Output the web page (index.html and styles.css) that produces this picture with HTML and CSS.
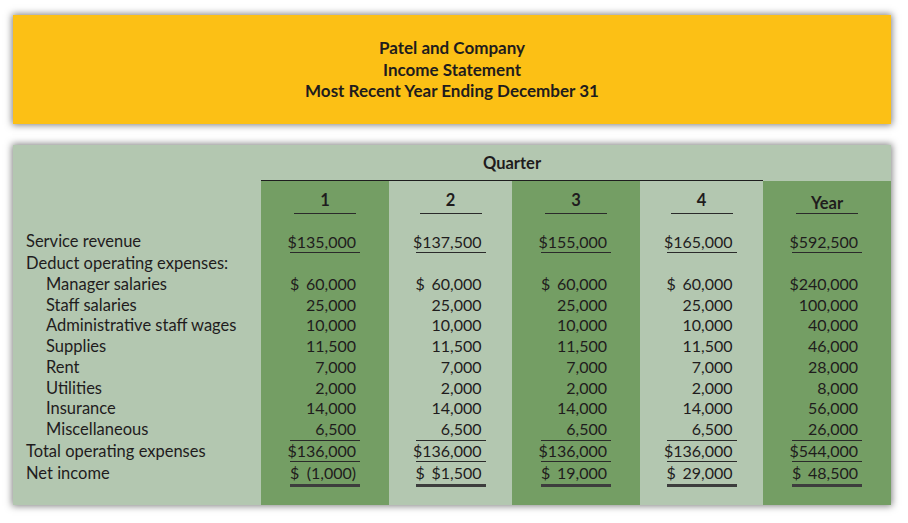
FILE: index.html
```html
<!DOCTYPE html>
<html>
<head>
<meta charset="utf-8">
<link rel="stylesheet" href="styles.css">
</head>
<body>
<div class="page">
  <div class="title">
    <div>Patel and Company</div>
    <div>Income Statement</div>
    <div>Most Recent Year Ending December 31</div>
  </div>
  <div class="panel">
    <div class="corner"></div>
    <div class="quarter">Quarter</div>
    <div class="corner"></div>

    <div class="col labels">
      <div class="hd"></div>
      <div class="cell rev"><div class="box">Service revenue</div></div>
      <div class="cell"><div class="box">Deduct operating expenses:</div></div>
      <div class="cell"><div class="box ind">Manager salaries</div></div>
      <div class="cell"><div class="box ind">Staff salaries</div></div>
      <div class="cell"><div class="box ind">Administrative staff wages</div></div>
      <div class="cell"><div class="box ind">Supplies</div></div>
      <div class="cell"><div class="box ind">Rent</div></div>
      <div class="cell"><div class="box ind">Utilities</div></div>
      <div class="cell"><div class="box ind">Insurance</div></div>
      <div class="cell"><div class="box ind">Miscellaneous</div></div>
      <div class="cell tot"><div class="box">Total operating expenses</div></div>
      <div class="cell net"><div class="box">Net income</div></div>
    </div>

    <div class="col val dark">
      <div class="hd"><div class="hdbox">1</div></div>
      <div class="cell rev"><div class="box end">$135,000</div></div>
      <div class="cell"><div class="box"></div></div>
      <div class="cell"><div class="box"><span>$</span><span>60,000</span></div></div>
      <div class="cell"><div class="box">25,000</div></div>
      <div class="cell"><div class="box">10,000</div></div>
      <div class="cell"><div class="box">11,500</div></div>
      <div class="cell"><div class="box">7,000</div></div>
      <div class="cell"><div class="box">2,000</div></div>
      <div class="cell"><div class="box">14,000</div></div>
      <div class="cell"><div class="box">6,500</div></div>
      <div class="cell tot"><div class="box end">$136,000</div></div>
      <div class="cell net"><div class="box"><span>$</span><span class="paren">(1,000)</span></div></div>
    </div>

    <div class="col val">
      <div class="hd"><div class="hdbox">2</div></div>
      <div class="cell rev"><div class="box"><span>$</span><span>137,500</span></div></div>
      <div class="cell"><div class="box"></div></div>
      <div class="cell"><div class="box"><span>$</span><span>60,000</span></div></div>
      <div class="cell"><div class="box">25,000</div></div>
      <div class="cell"><div class="box">10,000</div></div>
      <div class="cell"><div class="box">11,500</div></div>
      <div class="cell"><div class="box">7,000</div></div>
      <div class="cell"><div class="box">2,000</div></div>
      <div class="cell"><div class="box">14,000</div></div>
      <div class="cell"><div class="box">6,500</div></div>
      <div class="cell tot"><div class="box"><span>$</span><span>136,000</span></div></div>
      <div class="cell net"><div class="box"><span>$</span><span>$1,500</span></div></div>
    </div>

    <div class="col val dark">
      <div class="hd"><div class="hdbox">3</div></div>
      <div class="cell rev"><div class="box"><span>$</span><span>155,000</span></div></div>
      <div class="cell"><div class="box"></div></div>
      <div class="cell"><div class="box"><span>$</span><span>60,000</span></div></div>
      <div class="cell"><div class="box">25,000</div></div>
      <div class="cell"><div class="box">10,000</div></div>
      <div class="cell"><div class="box">11,500</div></div>
      <div class="cell"><div class="box">7,000</div></div>
      <div class="cell"><div class="box">2,000</div></div>
      <div class="cell"><div class="box">14,000</div></div>
      <div class="cell"><div class="box">6,500</div></div>
      <div class="cell tot"><div class="box"><span>$</span><span>136,000</span></div></div>
      <div class="cell net"><div class="box"><span>$</span><span>19,000</span></div></div>
    </div>

    <div class="col val">
      <div class="hd"><div class="hdbox">4</div></div>
      <div class="cell rev"><div class="box"><span>$</span><span>165,000</span></div></div>
      <div class="cell"><div class="box"></div></div>
      <div class="cell"><div class="box"><span>$</span><span>60,000</span></div></div>
      <div class="cell"><div class="box">25,000</div></div>
      <div class="cell"><div class="box">10,000</div></div>
      <div class="cell"><div class="box">11,500</div></div>
      <div class="cell"><div class="box">7,000</div></div>
      <div class="cell"><div class="box">2,000</div></div>
      <div class="cell"><div class="box">14,000</div></div>
      <div class="cell"><div class="box">6,500</div></div>
      <div class="cell tot"><div class="box"><span>$</span><span>136,000</span></div></div>
      <div class="cell net"><div class="box"><span>$</span><span>29,000</span></div></div>
    </div>

    <div class="col val dark">
      <div class="hd"><div class="hdbox year">Year</div></div>
      <div class="cell rev"><div class="box"><span>$</span><span>592,500</span></div></div>
      <div class="cell"><div class="box"></div></div>
      <div class="cell"><div class="box"><span>$</span><span>240,000</span></div></div>
      <div class="cell"><div class="box">100,000</div></div>
      <div class="cell"><div class="box">40,000</div></div>
      <div class="cell"><div class="box">46,000</div></div>
      <div class="cell"><div class="box">28,000</div></div>
      <div class="cell"><div class="box">8,000</div></div>
      <div class="cell"><div class="box">56,000</div></div>
      <div class="cell"><div class="box">26,000</div></div>
      <div class="cell tot"><div class="box"><span>$</span><span>544,000</span></div></div>
      <div class="cell net"><div class="box"><span>$</span><span>48,500</span></div></div>
    </div>
  </div>
</div>
</body>
</html>
```

FILE: styles.css
```css
html, body {
  margin: 0;
  padding: 0;
  background: #ffffff;
}

body {
  font-family: Lato, "Open Sans", "Liberation Sans", sans-serif;
  color: #1f1c1d;
  font-size: 16px;
}

.page {
  display: flex;
  flex-direction: column;
  gap: 21px;
  padding: 15px 17px 18px 13px;
}

.title {
  height: 109px;
  background: #fcc015;
  box-shadow: 0 0 7px 1px rgba(0, 0, 0, 0.5);
  display: flex;
  flex-direction: column;
  justify-content: center;
  align-items: center;
  font-weight: 700;
  font-size: 17px;
  line-height: 21.5px;
}

.panel {
  height: 360px;
  background: #b3c7b0;
  box-shadow: 0 0 7px 1px rgba(0, 0, 0, 0.5);
  display: grid;
  grid-template-columns: 248px 128px 123px 128px 123px 128px;
  grid-template-rows: 36px 1fr;
}

.quarter {
  grid-column: 2 / 6;
  box-sizing: border-box;
  height: 36px;
  padding-top: 8px;
  line-height: 20px;
  font-size: 16.5px;
  text-align: center;
  font-weight: 700;
  border-bottom: 1.5px solid #1e1e1e;
}

.col {
  display: flex;
  flex-direction: column;
}

.dark {
  background: #749e64;
}

.hd {
  height: 50px;
  box-sizing: border-box;
}

.hdbox {
  width: 62px;
  margin: 0 auto;
  padding-top: 9px;
  padding-bottom: 3px;
  line-height: 20px;
  font-size: 16.5px;
  text-align: center;
  font-weight: 700;
  border-bottom: 1.5px solid #2a2a2a;
}

.hdbox.year {
  padding-top: 12px;
  padding-bottom: 0;
}

.cell {
  height: 20.75px;
  line-height: 20.75px;
  white-space: nowrap;
}

.cell .box {
  box-sizing: border-box;
  height: 100%;
}

.labels .box {
  padding-left: 13px;
  font-size: 16.5px;
}

.labels .box.ind {
  padding-left: 33px;
}

.val .box {
  width: 70px;
  margin: 0 auto;
  padding-right: 4px;
  display: flex;
  justify-content: flex-end;
}

.val .box span:first-child:not(:last-child) {
  margin-right: auto;
}

.cell.rev {
  height: 22px;
}

.cell.rev .box {
  line-height: 21px;
  border-bottom: 1px solid transparent;
}

.cell.tot {
  height: 21px;
}

.cell.tot .box {
  line-height: 20px;
  border-top: 1px solid transparent;
}

.cell.net {
  height: 26px;
}

.cell.net .box {
  line-height: 22px;
  border-top: 1px solid transparent;
  border-bottom: 3px solid transparent;
}

.val .cell.rev .box,
.val .cell.tot .box {
  border-color: #2a2a2a;
}

.val .cell.net .box {
  border-top-color: #2a2a2a;
  border-bottom-color: #3d3d3d;
}
```
